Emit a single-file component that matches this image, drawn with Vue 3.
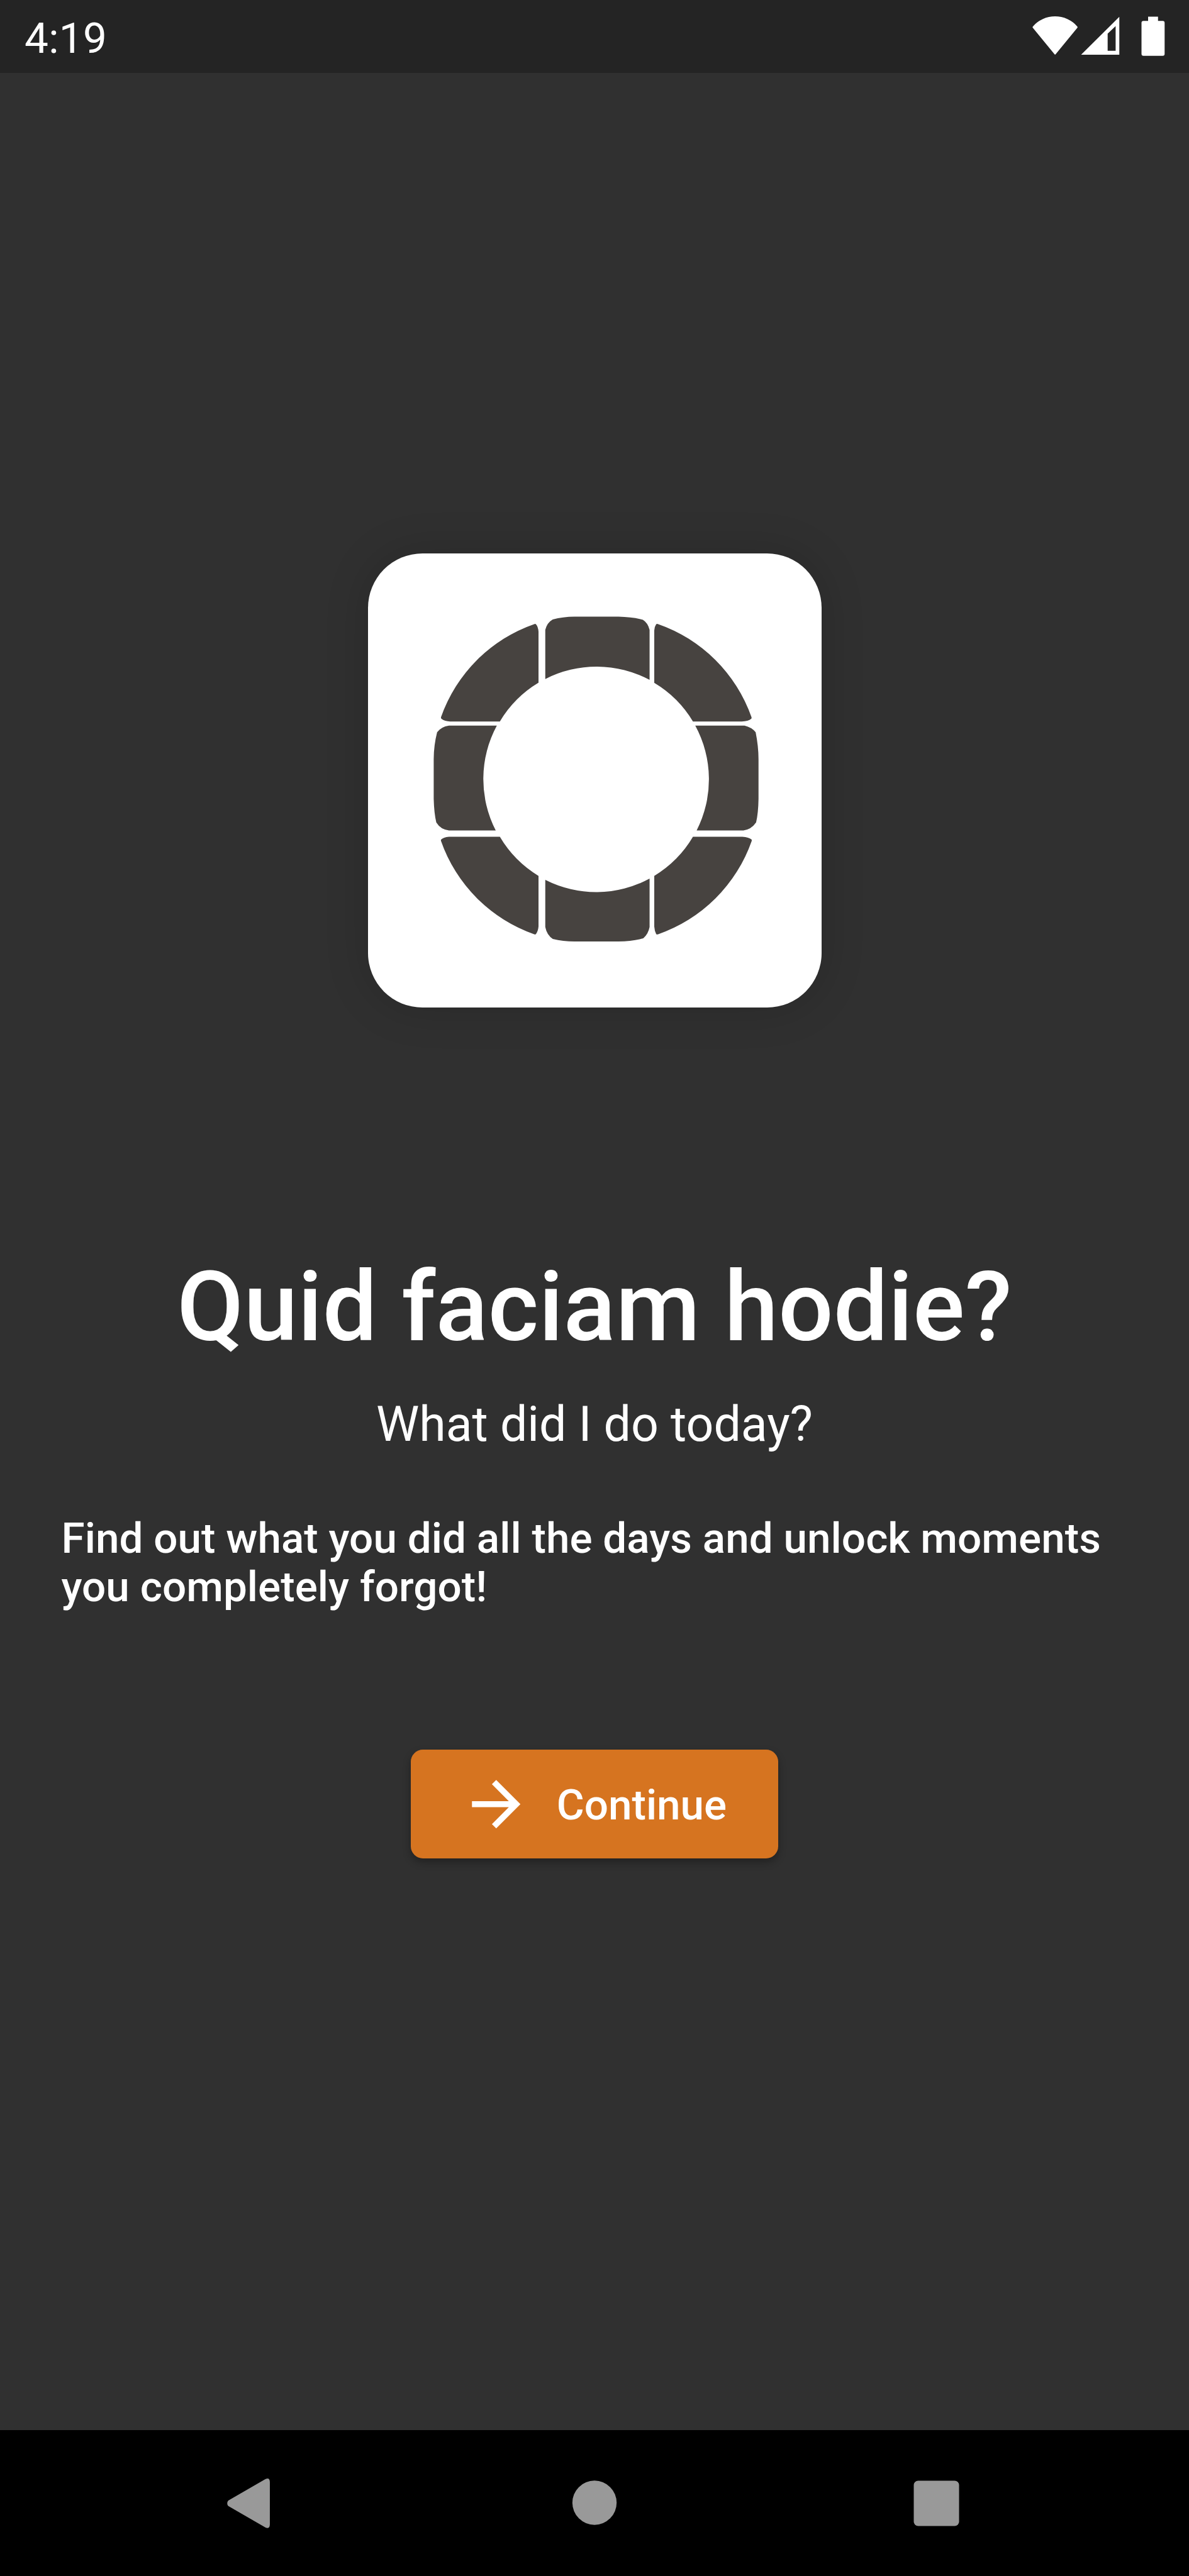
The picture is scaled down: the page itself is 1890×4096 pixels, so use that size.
<script setup>
const time = '4:19'

const logoPieces = [
  // top, bottom, left, right blocks
  'M990 1234.2V1145Q993 1132 1003.5 1126Q1022 1121.2 1043 1121H1123Q1148 1121.5 1167.3 1126.5Q1176.5 1132 1179.5 1145V1235.8A204.3 204.3 0 0 0 990 1234.2Z',
  'M990 1599.3V1685Q993 1700 1003.7 1706.6Q1022 1711.3 1043 1711.3H1123Q1148 1711 1168 1705.6Q1177 1698 1179.5 1685V1597A204.3 204.3 0 0 1 990 1599.3Z',
  'M902 1319H815Q801 1321 793.5 1331Q787.4 1355 787.3 1380V1452Q788 1478 792 1495Q800 1508 815 1509.4H900A204.3 204.3 0 0 1 902 1319Z',
  'M1262.5 1319H1352Q1365 1322 1372.2 1331Q1377.4 1357 1377.4 1380V1452Q1377 1478 1373 1495Q1364 1508 1350 1509.4H1265A204.3 204.3 0 0 0 1262.5 1319Z',
  // diagonal wedges
  'M977.7 1241V1148Q977 1139 973 1134.5Q972 1133.7 970.5 1134.2A276 276 0 0 0 800.6 1303.5Q800.3 1305.6 801.5 1306.6Q807 1311 817 1311.5H907.5A204.3 204.3 0 0 1 977.7 1241Z',
  'M1188 1241.3V1146Q1188.5 1139 1191.5 1134.7Q1192.5 1133.7 1194.5 1134.2A276 276 0 0 1 1364.6 1303.5Q1365.2 1305.6 1364 1306.6Q1359 1311 1347 1311.5H1258.3A204.3 204.3 0 0 0 1188 1241.3Z',
  'M907.5 1521H815Q805 1522 801 1525.7Q800 1526.6 800.6 1528.5A276 276 0 0 0 970.5 1698.2Q972 1698.7 973 1697.8Q977 1692 977.7 1684V1592A204.3 204.3 0 0 1 907.5 1521Z',
  'M1258.3 1521H1348Q1360 1522 1364.6 1525.7Q1365.6 1526.6 1365 1528.5A276 276 0 0 1 1194.5 1698.2Q1192.5 1698.7 1191.5 1697.8Q1188.5 1692 1188 1684V1592A204.3 204.3 0 0 0 1258.3 1521Z',
]
</script>

<template>
  <div class="screen">
    <header class="status-bar">
      <span class="clock">{{ time }}</span>
      <svg class="status-icons" viewBox="1870 0 290 132" fill="#fff" aria-hidden="true">
        <path d="M1876.6 48.2A53.2 53.2 0 0 1 1957.4 48.2Q1958.4 49.3 1957.6 50.4L1918 98.6Q1917 99.8 1916 98.6L1876.4 50.4Q1875.6 49.3 1876.6 48.2Z" />
        <path fill-rule="evenodd" d="M2033.7 30.5V99.5H1964.3ZM2027 47.5L2012.5 61V92.3H2027Z" />
        <path d="M2086 30.3H2104V38H2112.5Q2116 38 2116 41.5V98Q2116 101.5 2112.5 101.5H2077.5Q2074 101.5 2074 98V41.5Q2074 38 2077.5 38H2086Z" />
      </svg>
    </header>

    <main class="welcome">
      <div class="logo-card">
        <svg class="logo" viewBox="668 1006 824 824.5" fill="#474340" aria-hidden="true">
          <path v-for="(d, i) in logoPieces" :key="i" :d="d" />
        </svg>
      </div>
      <h1 class="title">Quid faciam hodie?</h1>
      <p class="subtitle">What did I do today?</p>
      <p class="intro">Find out what you did all the days and unlock moments you completely forgot!</p>
      <button class="continue" type="button">
        <svg class="arrow" viewBox="0 0 24 24" fill="#fff" aria-hidden="true">
          <path d="M12 4l-1.41 1.41L16.17 11H4v2h12.17l-5.58 5.59L12 20l8-8z" />
        </svg>
        <span class="continue-label">Continue</span>
      </button>
    </main>

    <nav class="nav-bar">
      <svg class="nav-icons" viewBox="0 4416 2160 264" fill="#999" aria-hidden="true">
        <path d="M414.8 4544L482 4505.2Q490.2 4501.5 490.2 4510.5V4587.5Q490.2 4596.5 482 4592.8L414.8 4554Q410.5 4549 414.8 4544Z" />
        <circle cx="1080" cy="4548" r="40.2" />
        <rect x="1660" y="4508" width="82.3" height="82.3" rx="8" />
      </svg>
    </nav>
  </div>
</template>

<style>
html,
body {
  margin: 0;
  background: #303030;
}
</style>

<style scoped>
.screen {
  display: flex;
  flex-direction: column;
  width: 1890px;
  height: 4096px;
  overflow: hidden;
  background: #303030;
  color: #fff;
  font-family: Roboto, sans-serif;
}

.status-bar {
  display: flex;
  flex: none;
  justify-content: space-between;
  align-items: flex-start;
  height: 115.5px;
  background: #242424;
}

.clock {
  padding: 21px 0 0 39px;
  font-size: 67.375px;
  line-height: 79px;
  letter-spacing: 0.3px;
}

.status-icons {
  display: block;
  width: 253.75px;
  height: 115.5px;
}

.welcome {
  display: flex;
  flex: 1;
  flex-direction: column;
  align-items: center;
  padding-top: 764.75px;
}

.logo-card {
  flex: none;
  width: 721px;
  height: 721.4px;
  border-radius: 86.6px;
  background: #fff;
  box-shadow: 0 0 70px rgba(0, 0, 0, 0.16);
}

.logo {
  display: block;
  width: 100%;
  height: 100%;
}

.title {
  margin: 387.6px 0 0;
  font-size: 154px;
  font-weight: 500;
  line-height: 180px;
  letter-spacing: 0.15px;
  white-space: nowrap;
}

.subtitle {
  margin: 50.75px 0 0;
  font-size: 77px;
  font-weight: 400;
  line-height: 90px;
}

.intro {
  align-self: stretch;
  margin: 97.5px 90px 0 97.5px;
  font-size: 67.375px;
  font-weight: 500;
  line-height: 77px;
  letter-spacing: 0.06px;
}

.continue {
  display: flex;
  align-items: center;
  gap: 38.5px;
  box-sizing: border-box;
  width: 583.4px;
  height: 173.25px;
  margin: 220.35px 0 0;
  padding: 0 0 0 77.5px;
  border: 0;
  border-radius: 19.25px;
  background: #d67420;
  box-shadow: 0 6px 13px rgba(0, 0, 0, 0.3);
  color: #fff;
  font-family: inherit;
}

.arrow {
  flex: none;
  width: 115.5px;
  height: 115.5px;
}

.continue-label {
  padding-top: 2px;
  font-size: 67.375px;
  font-weight: 500;
  line-height: 79px;
}

.nav-bar {
  flex: none;
  height: 232px;
  background: #000;
}

.nav-icons {
  display: block;
  width: 1890px;
  height: 231px;
}
</style>
